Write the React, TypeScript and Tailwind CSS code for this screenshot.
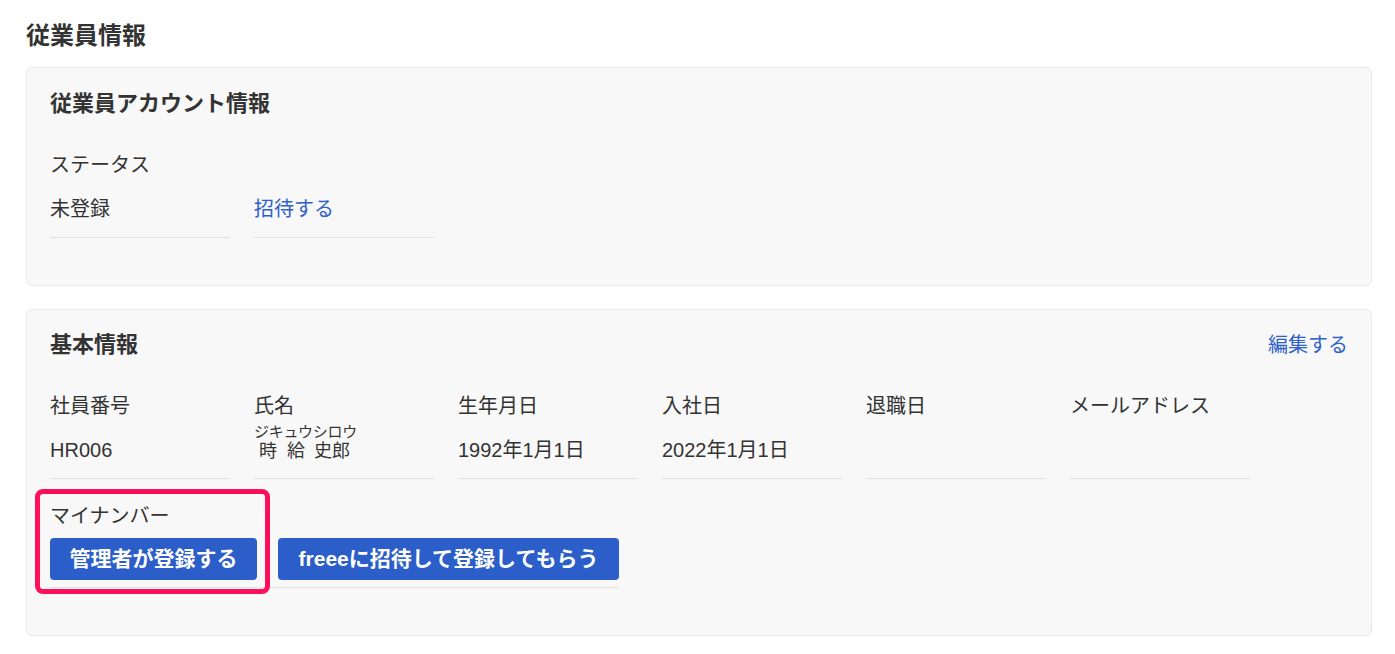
const font = { fontFamily: '"Liberation Sans", "Noto Sans CJK JP", sans-serif' }

function Field({ label, children }: { label: string; children?: React.ReactNode }) {
  return (
    <div className="w-[180px]">
      <div className="mt-[30px] text-[20px] leading-[30px] text-[#333]">{label}</div>
      <div className="h-[58px] border-b border-[#e2e2e2] pt-[14px] text-[20px] leading-[30px] text-[#333]">
        {children}
      </div>
    </div>
  )
}

export default function App() {
  return (
    <div className="min-h-screen bg-white pl-[26px] pr-[23px] pt-[18px] pb-[18px]" style={font}>
      <h1 className="text-[24px] font-bold leading-[36px] text-[#333]">従業員情報</h1>

      <section className="mt-[13px] rounded-[6px] border border-[#e9e9e9] bg-[#f8f8f8] px-[23px] pt-[20px] pb-[47px]">
        <h2 className="text-[22px] font-bold leading-[32px] text-[#333]">従業員アカウント情報</h2>
        <div className="mt-[30px] text-[20px] leading-[30px] text-[#333]">ステータス</div>
        <div className="flex gap-[24px]">
          <div className="w-[180px] border-b border-[#e2e2e2] pt-[14px] pb-[13px] text-[20px] leading-[30px] text-[#333]">
            未登録
          </div>
          <div className="w-[180px] border-b border-[#e2e2e2] pt-[14px] pb-[13px] text-[20px] leading-[30px]">
            <a className="text-[#2f62c8]">招待する</a>
          </div>
        </div>
      </section>

      <section className="mt-[23px] rounded-[6px] border border-[#e9e9e9] bg-[#f8f8f8] px-[23px] pt-[19px] pb-[47px]">
        <div className="flex items-center justify-between">
          <h2 className="text-[22px] font-bold leading-[32px] text-[#333]">基本情報</h2>
          <a className="text-[20px] leading-[32px] text-[#2f62c8]">編集する</a>
        </div>

        <div className="flex gap-[24px]">
          <Field label="社員番号">HR006</Field>
          <div className="w-[180px]">
            <div className="mt-[30px] text-[20px] leading-[30px] text-[#333]">氏名</div>
            <div className="h-[58px] border-b border-[#e2e2e2] pt-[4px] text-[#333]">
              <div className="text-[15px] leading-[14px] tracking-[-0.3px]">ジキュウシロウ</div>
              <div className="text-[18px] leading-[24px]">
                <span className="ml-[5px]">時</span>
                <span className="ml-[10px]">給</span>
                <span className="ml-[9px]">史郎</span>
              </div>
            </div>
          </div>
          <Field label="生年月日">1992年1月1日</Field>
          <Field label="入社日">2022年1月1日</Field>
          <Field label="退職日" />
          <Field label="メールアドレス" />
        </div>

        <div className="relative w-[569px]">
          <div className="mt-[22px] text-[20px] leading-[30px] text-[#333]">マイナンバー</div>
          <div className="mt-[7px] flex gap-[21px] border-b border-[#e2e2e2] pb-[7px]">
            <button className="h-[42px] w-[207px] rounded-[4px] bg-[#2b5ec8] text-[21px] font-bold text-white">
              管理者が登録する
            </button>
            <button className="h-[42px] w-[341px] rounded-[4px] bg-[#2b5ec8] text-[21px] font-bold text-white">
              freeeに招待して登録してもらう
            </button>
          </div>
          <div className="pointer-events-none absolute left-[-15px] top-[-12px] h-[105px] w-[235px] rounded-[8px] border-[5px] border-[#ff0f5a]" />
        </div>
      </section>
    </div>
  )
}
